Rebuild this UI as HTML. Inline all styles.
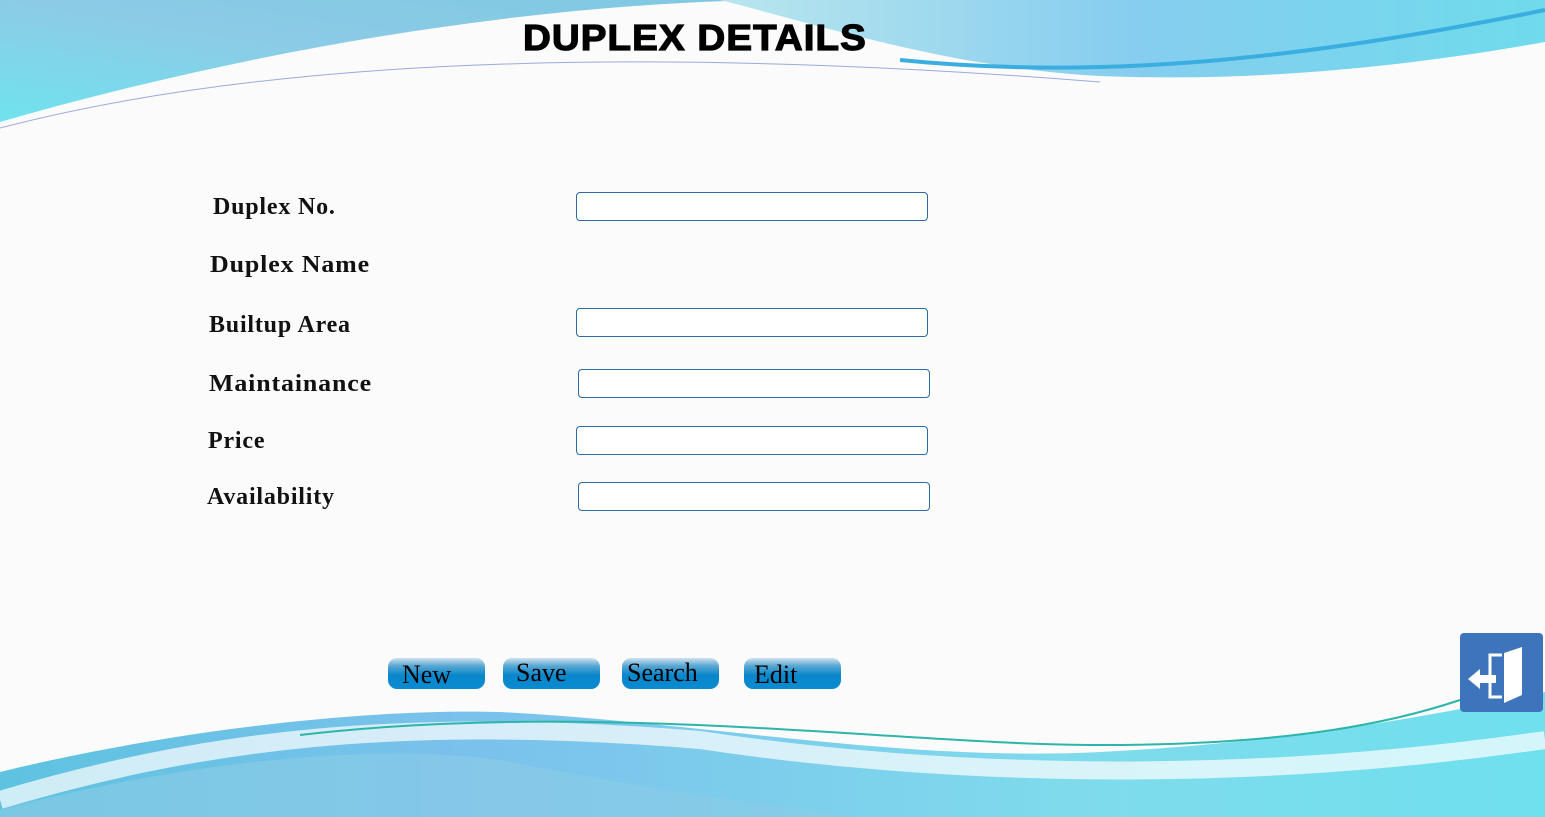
<!DOCTYPE html>
<html><head><meta charset="utf-8"><style>
body{margin:0;width:1545px;height:817px;overflow:hidden;background:#fbfbfb;position:relative;font-family:"Liberation Serif",serif}
svg.bg{position:absolute;left:0;top:0}
h1{position:absolute;left:523px;top:17px;margin:0;font:bold 36px "Liberation Sans",sans-serif;letter-spacing:1px;color:#000;-webkit-text-stroke:1.2px #000;transform-origin:0 0;transform:scaleX(1.07);white-space:nowrap}
.l{position:absolute;font-weight:bold;font-size:24px;color:#111;letter-spacing:0.8px;transform-origin:0 0;white-space:nowrap}
.i{position:absolute;width:350px;height:27px;border:1px solid #2d6aa6;border-radius:4px;background:#fff}
.b{position:absolute;top:658px;width:97px;height:31px;border-radius:9px;background:linear-gradient(#cfe3ee 0%,#5aa8d3 25%,#0a87cc 55%,#0a8ad0 100%);font-size:26px;color:#000;box-sizing:border-box;padding-left:14px;line-height:34px}
</style></head><body>
<svg class="bg" width="1545" height="817">
<defs>
<linearGradient id="g1" x1="0" y1="1" x2="1" y2="0"><stop offset="0" stop-color="#6fe3ee"/><stop offset="0.5" stop-color="#8ccbe6"/><stop offset="1" stop-color="#7fc8e2"/></linearGradient>
<linearGradient id="g2" x1="0" y1="0" x2="1" y2="0"><stop offset="0" stop-color="#b9e6ee"/><stop offset="0.5" stop-color="#86cdef"/><stop offset="1" stop-color="#6fdbec"/></linearGradient>
<linearGradient id="g3" x1="0" y1="0" x2="1" y2="0"><stop offset="0" stop-color="#5ec3e0"/><stop offset="0.3" stop-color="#7ac1ec"/><stop offset="0.7" stop-color="#7fdbec"/><stop offset="1" stop-color="#6fe0ee"/></linearGradient>
</defs>
<path d="M0,0 H760 C520,5 250,50 0,122 Z" fill="url(#g1)"/>
<path d="M720,0 H1545 V42 C1400,68 1250,82 1100,76 C950,68 820,25 720,0Z" fill="url(#g2)"/>
<path d="M900,60 C1100,80 1300,60 1545,10" stroke="#3aaee0" stroke-width="4" fill="none"/>
<path d="M0,128 C300,50 700,50 1100,82" stroke="#9ad" stroke-width="1" fill="none"/>
<path d="M0,817 V772 C150,735 350,708 500,712 C700,722 900,762 1100,752 C1300,742 1450,712 1545,692 V817Z" fill="url(#g3)"/>
<path d="M0,800 C200,740 400,715 700,740 C900,770 1200,790 1545,740" stroke="#fff" stroke-width="18" fill="none" opacity="0.7"/>
<path d="M500,760 C650,790 800,810 860,817 H0 V810 C150,770 350,740 500,760Z" fill="#8ccbe6" opacity="0.6"/>
<path d="M300,735 C600,700 900,745 1100,745 C1300,745 1400,720 1460,700" stroke="#2cb5a8" stroke-width="2" fill="none"/>
</svg>
<h1>DUPLEX DETAILS</h1>
<div class="l" style="left:213px;top:194px;transform:scaleX(1.0)">Duplex No.</div>
<div class="l" style="left:210px;top:252px;transform:scaleX(1.08)">Duplex Name</div>
<div class="l" style="left:209px;top:312px;transform:scaleX(1.0)">Builtup Area</div>
<div class="l" style="left:209px;top:371px;transform:scaleX(1.08)">Maintainance</div>
<div class="l" style="left:208px;top:428px;transform:scaleX(1.0)">Price</div>
<div class="l" style="left:207px;top:484px;transform:scaleX(1.0)">Availability</div>
<div class="i" style="left:576px;top:192px"></div>
<div class="i" style="left:576px;top:308px"></div>
<div class="i" style="left:578px;top:369px"></div>
<div class="i" style="left:576px;top:426px"></div>
<div class="i" style="left:578px;top:482px"></div>
<div class="b" style="left:388px">New</div>
<div class="b" style="left:503px;padding-left:13px;line-height:30px">Save</div>
<div class="b" style="left:622px;padding-left:5px;line-height:30px">Search</div>
<div class="b" style="left:744px;padding-left:10px">Edit</div>
<svg style="position:absolute;left:1460px;top:633px" width="83" height="79">
<rect x="0" y="0" width="83" height="79" rx="4" fill="#3d74bb"/>
<polygon points="44,20 62,14 62,62 44,70" fill="#fff"/>
<path d="M42,22 H30 V42 M30,50 V64 H42" stroke="#fff" stroke-width="3" fill="none"/>
<polygon points="8,46 20,36 20,42 36,42 36,50 20,50 20,56" fill="#fff"/>
</svg>
</body></html>
